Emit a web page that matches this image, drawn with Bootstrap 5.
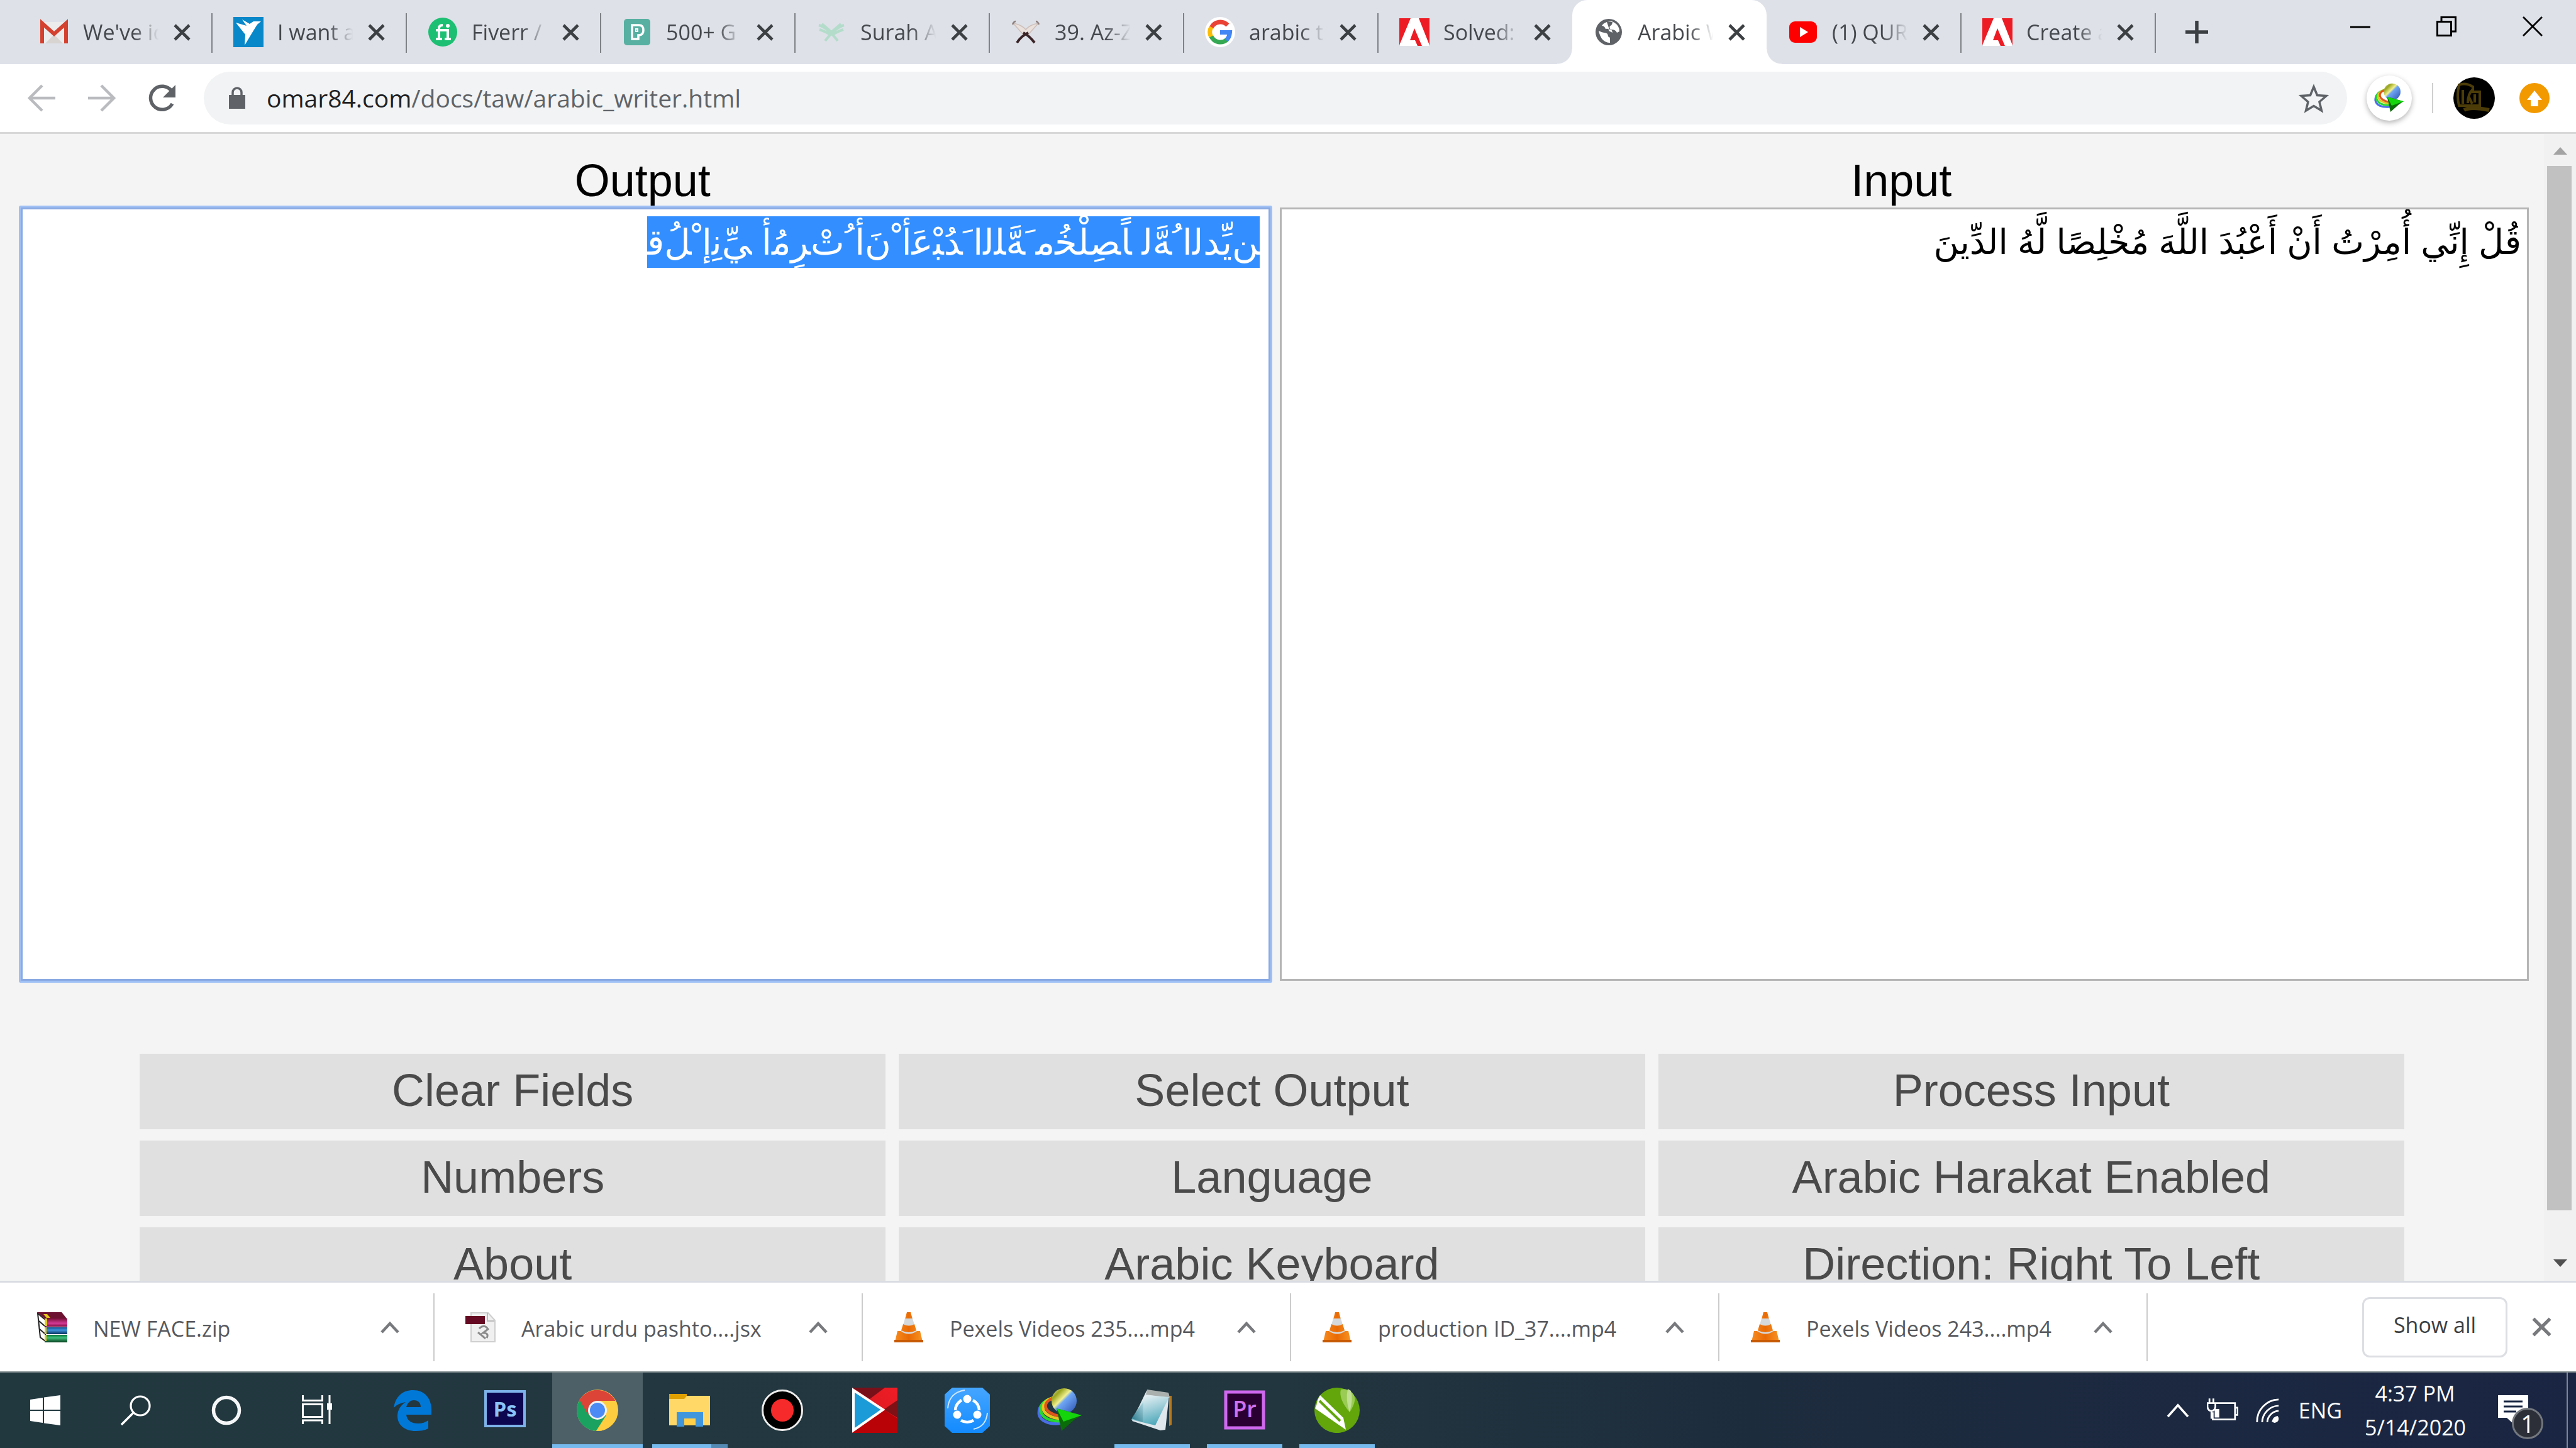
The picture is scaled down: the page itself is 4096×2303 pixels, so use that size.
<!DOCTYPE html>
<html lang="en">
<head>
<meta charset="utf-8">
<meta name="viewport" content="width=device-width, initial-scale=1">
<title>Arabic Writer</title>
<link href="https://cdn.jsdelivr.net/npm/bootstrap@5.3.0/dist/css/bootstrap.min.css" rel="stylesheet">
<style>
html,body{height:100%}
body{font-family:"Open Sans","Noto Sans",sans-serif;color:#3c4043;background:#fff;overflow:hidden}
svg{display:block;flex:none}
button{background:none;border:0;padding:0;color:inherit;font-family:inherit}
.i27{width:27px;height:27px}.i42{width:42px;height:42px}.i48{width:48px;height:48px}.i66{width:66px;height:66px}.i72{width:72px;height:72px}
/* tab strip */
.tabstrip{height:102px;background:#dee1e8;padding-left:28px}
.tab{width:309px;padding-left:34px;position:relative;font-size:34px;line-height:48px}
.tab-title{width:123px;margin:0 21px 0 22px;overflow:hidden;white-space:nowrap;color:#45484d;text-decoration:none;-webkit-mask-image:linear-gradient(90deg,#000 66%,transparent 98%);mask-image:linear-gradient(90deg,#000 66%,transparent 98%)}
.tab::after{content:"";position:absolute;right:-1px;top:21px;height:63px;width:2px;background:#7f8287}
.tab.current{background:#fff;border-radius:24px 24px 0 0}
.tab.current::after,.tab.nosep::after{display:none}
.tab.current::before{content:"";position:absolute;left:-24px;right:-24px;bottom:0;height:24px;background:radial-gradient(circle at 0 0,transparent 23px,#fff 24px) left/24px 24px no-repeat,radial-gradient(circle at 100% 0,transparent 23px,#fff 24px) right/24px 24px no-repeat}
.win-btns{gap:105px;padding:0 53px 18px 0}
/* toolbar */
.toolbar{height:111px;border-bottom:3px solid #d8d8d8;padding:0 42px 0 42px}
.omnibox{height:84px;border-radius:42px;background:#f1f3f4;padding:0 29px 0 38px;margin-left:42px;margin-right:31px}
.url{font-size:39px;line-height:54px;color:#5f6368;background:none;border:0;outline:0}
.url span{color:#202124}
.ext{width:72px;height:72px;border-radius:50%;background:#fff;box-shadow:0 3px 9px rgba(0,0,0,.3)}
.tool-sep{width:2px;height:48px;background:#cfcfcf;margin:0 32px}
.update{margin-left:39px}
/* page */
.page{min-height:0;background:#f4f4f4;font-family:"Liberation Sans",sans-serif}
.page-body{padding:32px 24px 0 33px;overflow:hidden}
.fields{gap:15px}
.fields label{display:block;font-size:72px;line-height:85px;color:#000;text-align:center;padding-right:9px}
.fields textarea{display:block;width:100%;height:1230px;border:3px solid #b5b5b5;border-radius:0;background:#fff;color:#000;padding:11px 9px;resize:none;outline:0;font-family:"Liberation Sans","DejaVu Sans",sans-serif;font-size:55px;line-height:82px;overflow:hidden}
.fields textarea.ringed{border-color:#8aaae3;box-shadow:0 0 0 3px #9fc0f5;border-radius:1px;font-size:57px;padding-right:14px}
.fields textarea::selection{background:#338fff;color:#fff}
.actions{margin:116px 198px 0 189px;display:grid;grid-template-columns:repeat(3,1fr);gap:18px 21px}
.actions button{height:120px;padding-bottom:3px;background:#e0e0e0;color:#4a4a4a;font-size:72px;line-height:117px}
.scrollbar{width:51px;background:#f1f1f1;padding:21px 0 22px}
.scroll-thumb{width:39px;margin:18px 6px 0 5px;height:1661px;background:#c1c1c1}
/* download shelf */
.shelf{height:146px;border-top:3px solid #dadce4;border-bottom:2px solid #8b9697;background:#fff;padding:0 39px 0 10px}
.dl{width:681px;height:108px;border-right:2px solid #ccc;padding:0 54px 0 49px;font-size:34px}
.dl a{color:#57595d;text-decoration:none;margin-left:41px;padding-top:6px}
.dl button,.shelf-x{color:#77797c}
.shelf-x{margin-left:39px}
.showall{height:96px;width:231px;border:3px solid #dcdee3;border-radius:12px;font-size:34px;font-weight:500;color:#3c4043;padding-bottom:6px}
/* taskbar */
.taskbar{height:120px;background:linear-gradient(90deg,#22383f 0,#22363f 50%,#1d2c3d 68%,#1a2543 100%);color:#fff}
.task{width:144px;height:120px;margin-right:3px;display:flex;align-items:center;justify-content:center;position:relative}
.task.sys{margin-right:0}
.task.on{background:#4d6068}
.task.run::after,.task.on::after{content:"";position:absolute;bottom:0;left:12px;right:12px;height:6px;background:#76b9ed}
.task.on::after{left:0;right:0}
.task.multi::after{background:linear-gradient(90deg,#76b9ed 78%,#5489b4 78%)}
.tray{font-size:34px;line-height:54px;padding-right:13px}
.tray-net{margin:0 30px 0 21px}
.clock{width:160px;margin:0 52px 0 36px}
.notes{margin-right:61px}
.note-badge{position:absolute;left:22px;top:20px;width:50px;height:50px;border-radius:50%;background:#2c2f38;border:3px solid #73777e;font-size:38px;line-height:44px;text-align:center}
.desk-edge{width:2px;height:120px;background:#7f8798}
</style>
<script src="https://cdn.jsdelivr.net/npm/bootstrap@5.3.0/dist/js/bootstrap.bundle.min.js"></script>
</head>
<body class="d-flex flex-column">
<svg width="0" height="0" class="position-absolute" aria-hidden="true">
<defs>
<linearGradient id="gGlobe" x1="0" y1="0" x2="1" y2="1"><stop offset="0" stop-color="#dfe3d0"/><stop offset=".22" stop-color="#9aa51c"/><stop offset=".42" stop-color="#f2f090"/><stop offset=".5" stop-color="#6fa6f5"/><stop offset="1" stop-color="#2a4fae"/></linearGradient>
<linearGradient id="gRed" x1="0" y1="1" x2="1" y2="0"><stop offset="0" stop-color="#8f0a0e"/><stop offset=".6" stop-color="#e31b22"/><stop offset="1" stop-color="#f01c26"/></linearGradient>
<linearGradient id="gShare" x1="0" y1="0" x2="0" y2="1"><stop offset="0" stop-color="#46a6ff"/><stop offset="1" stop-color="#128aff"/></linearGradient>
<linearGradient id="gNote" x1=".2" y1="0" x2=".6" y2="1"><stop offset="0" stop-color="#f1f6f8"/><stop offset=".5" stop-color="#9fced9"/><stop offset="1" stop-color="#4aa6b8"/></linearGradient>
<linearGradient id="gDark" x1="1" y1="0" x2="0" y2="1"><stop offset="0" stop-color="#a8d2dc"/><stop offset="1" stop-color="#0c6478"/></linearGradient>
<linearGradient id="gCone" x1="0" y1="0" x2="1" y2="0"><stop offset="0" stop-color="#f68b1f"/><stop offset=".5" stop-color="#e96a05"/><stop offset="1" stop-color="#f79422"/></linearGradient>
<linearGradient id="gPurple" x1="0" y1="0" x2="0" y2="1"><stop offset="0" stop-color="#7c0f3a"/><stop offset=".6" stop-color="#d43a97"/><stop offset="1" stop-color="#7a0a3e"/></linearGradient>
<linearGradient id="gBlueB" x1="0" y1="0" x2="0" y2="1"><stop offset="0" stop-color="#0d4a8a"/><stop offset=".4" stop-color="#3f94dd"/><stop offset="1" stop-color="#0a3260"/></linearGradient>
<linearGradient id="gGreenB" x1="0" y1="0" x2="0" y2="1"><stop offset="0" stop-color="#0a7a3c"/><stop offset=".4" stop-color="#3fbf7c"/><stop offset="1" stop-color="#053d1d"/></linearGradient>
</defs>
<symbol id="x" viewBox="0 0 27 27"><path d="M2 2 25 25M25 2 2 25" stroke="currentColor" stroke-width="4.6" fill="none"/></symbol>
<symbol id="chev" viewBox="0 0 30 20"><path d="M2 18 15 4 28 18" stroke="currentColor" stroke-width="4.5" fill="none"/></symbol>
<symbol id="adobe" viewBox="0 0 48 48"><path fill="#fff" d="M1 2h46v44H1z"/><path fill="#ed1c24" d="M0 2h18L0 45zM31 2h17v43zM24 18l12 28h-7l-4-9h-8z"/></symbol>
<symbol id="idm" viewBox="0 0 72 72"><g fill="none" stroke-width="4.6"><path d="M25 18C10 21 2 30 3 42c2 11 16 17 34 15" stroke="#4a6ee6"/><path d="M25 17C11 20 4 28 6 38c2 9 14 16 30 15" stroke="#27d832"/><path d="M26 16C14 19 8 26 10 35c2 7 12 13 26 14" stroke="#e0c820"/><path d="M26 16C17 20 12 26 14 32c2 6 10 11 20 13" stroke="#e2541c"/></g><circle cx="43" cy="21" r="20" fill="url(#gGlobe)"/><path d="M31 33 70 44 58 52 39 69z" fill="#0a6c08"/><path d="M31 33 71 44 42 54z" fill="#14d40c"/></symbol>
<symbol id="cone" viewBox="0 0 48 48"><path fill="url(#gCone)" d="M21 0h6l3 11H18zM15 22h18l5 14q-14 8-28 0z"/><path fill="#d5d9dc" d="M18 10h12l3 10q-9 5-18 0zM13 28h22l2 5q-13 7-26 0z"/><path fill="url(#gCone)" d="M15 19q9 5 18 0l3 10q-12 6-24 0zM6 30h5q13 9 26 0h5l4 17H2z"/><path fill="#c85a04" d="M1 44h46v4H1z"/></symbol>
</svg>

<nav class="tabstrip d-flex flex-shrink-0" aria-label="Tabs">
<div class="tab d-flex align-items-center"><svg class="i48" viewBox="0 0 48 48"><path fill="#ececec" d="M3 8h42v34H3z"/><path fill="#d8d4d2" d="M10 42 24 28l14 14z"/><path d="M5 42V10l19 17 19-17v32" fill="none" stroke="#d5412f" stroke-width="6"/></svg><a class="tab-title" href="#">We've ic</a><button aria-label="Close"><svg class="i27"><use href="#x"/></svg></button></div>
<div class="tab d-flex align-items-center"><svg class="i48" viewBox="0 0 48 48"><path fill="#0887c9" d="M0 0h48v48H0z"/><path fill="#fff" d="m14 4 12 7 6-4 12 0-6 5-8 13-12 20 1-17L4 9l17 5z"/></svg><a class="tab-title" href="#">I want a</a><button aria-label="Close"><svg class="i27"><use href="#x"/></svg></button></div>
<div class="tab d-flex align-items-center"><svg class="i48" viewBox="0 0 48 48"><circle cx="24" cy="24" r="23" fill="#1dbf73"/><path d="M18 36V18q0-5 6-5M13 21h19v15M13 35h10M27 35h10" fill="none" stroke="#fff" stroke-width="4"/><circle cx="32" cy="14" r="3" fill="#fff"/></svg><a class="tab-title" href="#">Fiverr /</a><button aria-label="Close"><svg class="i27"><use href="#x"/></svg></button></div>
<div class="tab d-flex align-items-center"><svg class="i48" viewBox="0 0 48 48"><rect x="3" y="3" width="42" height="42" rx="5" fill="#57b0a1"/><path d="M16 13h11q7 0 7 8t-8 8v6H16z" fill="none" stroke="#fff" stroke-width="3.5"/><path d="M22 19h3v4h-3z" fill="none" stroke="#fff" stroke-width="2"/></svg><a class="tab-title" href="#">500+ G</a><button aria-label="Close"><svg class="i27"><use href="#x"/></svg></button></div>
<div class="tab d-flex align-items-center"><svg class="i48" viewBox="0 0 48 48"><path d="M4 13q14 4 30 25M44 13Q30 17 14 38M5 20q12 4 18 9M43 20q-12 4-18 9M9 11l15 13 15-13" fill="none" stroke="#b4dccb" stroke-width="4"/></svg><a class="tab-title" href="#">Surah A</a><button aria-label="Close"><svg class="i27"><use href="#x"/></svg></button></div>
<div class="tab d-flex align-items-center"><svg class="i48" viewBox="0 0 48 48"><path fill="#eae0dc" stroke="#cdbfba" stroke-width="1.5" d="M4 10q13 2 20 10Q31 12 44 10L28 28h-8z"/><path d="M3 12q2-5 5-5M45 12q-2-5-5-5" fill="none" stroke="#8d7f7d" stroke-width="2.5"/><path d="M20 25q10 5 18 16M28 25Q17 30 10 41" fill="none" stroke="#3a2427" stroke-width="4"/></svg><a class="tab-title" href="#">39. Az-Z</a><button aria-label="Close"><svg class="i27"><use href="#x"/></svg></button></div>
<div class="tab d-flex align-items-center"><svg class="i48" viewBox="0 0 48 48"><circle cx="24" cy="24" r="24" fill="#fff"/><g fill="none" stroke-width="7"><path d="M36 13A16 16 0 0 0 10 17" stroke="#ea4335"/><path d="M10 16a16 16 0 0 0 0 16" stroke="#fbbc05"/><path d="M10 31a16 16 0 0 0 25 5" stroke="#34a853"/><path d="M24 24.500H39.500Q39 32 34 37" stroke="#4285f4"/></g></svg><a class="tab-title" href="#">arabic t</a><button aria-label="Close"><svg class="i27"><use href="#x"/></svg></button></div>
<div class="tab nosep d-flex align-items-center"><svg class="i48"><use href="#adobe"/></svg><a class="tab-title" href="#">Solved:</a><button aria-label="Close"><svg class="i27"><use href="#x"/></svg></button></div>
<div class="tab current d-flex align-items-center"><svg class="i48" viewBox="0 0 48 48"><circle cx="24" cy="24" r="21" fill="#5f6368"/><path fill="#fff" d="M8 22q6 3 9 3 6 0 6 6l3 2v8q-14 0-18-19zM22 8l8 0q-1 6-4 6-2 4 2 6 7 0 9 5l4-2q0-9-8-14l-4-2zM21 8q-6 2-8 6 4 0 6 5 6-1 5 3l6 3q-1-6-5-5-2-6-4-12z"/></svg><a class="tab-title" href="#">Arabic W</a><button aria-label="Close"><svg class="i27"><use href="#x"/></svg></button></div>
<div class="tab d-flex align-items-center"><svg class="i48" viewBox="0 0 48 48"><rect x="2" y="7" width="44" height="34" rx="9" fill="#f00"/><path d="m19 16 13 8-13 8z" fill="#fff"/></svg><a class="tab-title" href="#">(1) QUR</a><button aria-label="Close"><svg class="i27"><use href="#x"/></svg></button></div>
<div class="tab d-flex align-items-center"><svg class="i48"><use href="#adobe"/></svg><a class="tab-title" href="#">Create a</a><button aria-label="Close"><svg class="i27"><use href="#x"/></svg></button></div>
<button class="ms-5" aria-label="New tab"><svg width="36" height="36" viewBox="0 0 36 36"><path d="M18 0v36M0 18h36" stroke="#3c4043" stroke-width="5.500"/></svg></button>
<div class="win-btns d-flex align-items-center ms-auto text-black">
<button aria-label="Minimize"><svg width="32" height="32" viewBox="0 0 32 32"><path d="M0 17h32" stroke="#000" stroke-width="3"/></svg></button>
<button aria-label="Restore"><svg width="32" height="32" viewBox="0 0 32 32"><path d="M1.500 8.500h22v22h-22zM8 8V1.500h22.500V24H24" fill="none" stroke="#000" stroke-width="3"/></svg></button>
<button aria-label="Close window"><svg width="32" height="32" viewBox="0 0 32 32"><path d="m1 1 30 30M31 1 1 31" stroke="#000" stroke-width="2.800"/></svg></button>
</div>
</nav>

<div class="toolbar d-flex align-items-center flex-shrink-0">
<button aria-label="Back"><svg class="i48" viewBox="0 0 48 48"><path d="M46 24H6M25 4 5 24l20 20" fill="none" stroke="#b9bbbe" stroke-width="4.500"/></svg></button>
<button class="ms-5" aria-label="Forward"><svg class="i48" viewBox="0 0 48 48"><path d="M2 24h40M23 4l20 20-20 20" fill="none" stroke="#b9bbbe" stroke-width="4.500"/></svg></button>
<button class="ms-5" aria-label="Reload"><svg class="i48" viewBox="0 0 48 48"><path d="M40 33A18.500 18.500 0 1 1 39 13" fill="none" stroke="#5f6368" stroke-width="5.500"/><path d="M45 3v20H25z" fill="#5f6368"/></svg></button>
<div class="omnibox d-flex align-items-center flex-grow-1">
<svg width="30" height="36" viewBox="0 0 30 36"><path d="M2 13h26v22H2z" fill="#5f6368"/><path d="M8 14V9a7 7 0 0 1 14 0v5" fill="none" stroke="#5f6368" stroke-width="3.500"/></svg>
<div class="url ms-4 ps-2" role="textbox" aria-label="Address"><span>omar84.com</span>/docs/taw/arabic_writer.html</div>
<button class="ms-auto" aria-label="Bookmark"><svg class="i48" viewBox="0 0 48 48"><path d="m24 6 5.500 13.500L44 20.500 33 30l3.500 14L24 36.500 11.500 44 15 30 4 20.500l14.500-1z" fill="none" stroke="#5f6368" stroke-width="3.500"/></svg></button>
</div>
<button class="ext d-flex align-items-center justify-content-center" aria-label="Download manager"><svg class="i48"><use href="#idm"/></svg></button>
<div class="tool-sep"></div>
<svg class="i66" viewBox="0 0 66 66"><circle cx="33" cy="33" r="33" fill="#000"/><path d="M9 12q11-4 22 3v8h11v22H9q-4-16 0-33zm22 7q-8 7-8 22M15 20v22M34 27v13M24 30l6 12" fill="none" stroke="#4c3c08" stroke-width="4"/><path d="M17 52q10-6 40 0" fill="none" stroke="#4c3c08" stroke-width="6"/></svg>
<svg class="i48 update" viewBox="0 0 48 48"><circle cx="24" cy="24" r="24" fill="#f29900"/><path d="M24 12 36 27h-6v10H18V27h-6z" fill="#fff"/></svg>
</div>

<main class="page d-flex flex-grow-1">
<div class="page-body flex-grow-1">
<div class="fields d-flex">
<div class="flex-fill w-50"><label for="output">Output</label><textarea id="output" class="ringed" dir="rtl">َﻦﻳِّﺪﻟﺍ ُﻪَّﻟ ﺎًﺼِﻠْﺨُﻣ َﻪَّﻠﻟﺍ َﺪُﺒْﻋَﺃ ْﻥَﺃ ُﺕْﺮِﻣُﺃ ﻲِّﻧِﺇ ْﻞُﻗ</textarea></div>
<div class="flex-fill w-50"><label for="input">Input</label><textarea id="input" dir="rtl">قُلْ إِنِّي أُمِرْتُ أَنْ أَعْبُدَ اللَّهَ مُخْلِصًا لَّهُ الدِّينَ</textarea></div>
</div>
<div class="actions">
<button>Clear Fields</button><button>Select Output</button><button>Process Input</button>
<button>Numbers</button><button>Language</button><button>Arabic Harakat Enabled</button>
<button>About</button><button>Arabic Keyboard</button><button>Direction: Right To Left</button>
</div>
</div>
<div class="scrollbar d-flex flex-column flex-shrink-0">
<svg class="mx-auto" width="22" height="12" viewBox="0 0 22 12"><path d="m11 0 11 12H0z" fill="#a3a3a3"/></svg>
<div class="scroll-thumb"></div>
<svg class="mx-auto mt-auto" width="22" height="12" viewBox="0 0 22 12"><path d="M0 0h22L11 12z" fill="#505050"/></svg>
</div>
</main>

<footer class="shelf d-flex align-items-center flex-shrink-0">
<div class="dl d-flex align-items-center"><svg class="i48" viewBox="0 0 48 48"><path fill="#fff" stroke="#222" stroke-width="2" d="m1 2 12 10v34L5 40zM3 14l9 8M3 26l9 8"/><path fill="#6d1230" d="M0 0h39l8 10H12z"/><path fill="url(#gPurple)" d="M12 10h36v13H12z"/><path fill="url(#gBlueB)" d="M12 24h36v11H12z"/><path fill="url(#gGreenB)" d="M12 36h36v12H12z"/><path fill="#e4c81c" d="M12 10h4v12h-4zM12 24h3v11h-3zM12 36h3v10h-3zM10 3h6l5 6h-6z"/></svg><a href="#">NEW FACE.zip</a><button class="ms-auto" aria-label="Options"><svg width="30" height="20"><use href="#chev"/></svg></button></div>
<div class="dl d-flex align-items-center"><svg class="i48" viewBox="0 0 48 48"><path fill="#f0f0f0" stroke="#cfcfcf" stroke-width="2" d="M9 1h27l11 12v34H9z"/><path fill="none" stroke="#bcbcbc" stroke-width="2" d="M35 1v13h11"/><path d="M22 26q8-8 14 1l-8 6q10 0 6 8M20 32l12 10" fill="none" stroke="#8b8b8b" stroke-width="3"/><path fill="#650a22" d="M0 6h31v13H0z"/></svg><a href="#">Arabic urdu pashto....jsx</a><button class="ms-auto" aria-label="Options"><svg width="30" height="20"><use href="#chev"/></svg></button></div>
<div class="dl d-flex align-items-center"><svg class="i48"><use href="#cone"/></svg><a href="#">Pexels Videos 235....mp4</a><button class="ms-auto" aria-label="Options"><svg width="30" height="20"><use href="#chev"/></svg></button></div>
<div class="dl d-flex align-items-center"><svg class="i48"><use href="#cone"/></svg><a href="#">production ID_37....mp4</a><button class="ms-auto" aria-label="Options"><svg width="30" height="20"><use href="#chev"/></svg></button></div>
<div class="dl d-flex align-items-center"><svg class="i48"><use href="#cone"/></svg><a href="#">Pexels Videos 243....mp4</a><button class="ms-auto" aria-label="Options"><svg width="30" height="20"><use href="#chev"/></svg></button></div>
<button class="showall ms-auto">Show all</button>
<button class="shelf-x" aria-label="Close downloads"><svg width="31" height="31"><use href="#x"/></svg></button>
</footer>

<div class="taskbar d-flex flex-shrink-0">
<button class="task sys" aria-label="Start"><svg class="i48" viewBox="0 0 48 48"><path fill="#fff" d="M0 7 20 4v19H0zM22 3.500 48 0v23H22zM0 25h20v19L0 41zM22 25h26v23l-26-3.500z"/></svg></button>
<button class="task sys" aria-label="Search"><svg class="i48" viewBox="0 0 48 48"><circle cx="31" cy="17" r="15" fill="none" stroke="#fff" stroke-width="3.200"/><path d="M20 28 1 47" stroke="#fff" stroke-width="3.500"/></svg></button>
<button class="task sys" aria-label="Cortana"><svg class="i48" viewBox="0 0 48 48"><circle cx="24" cy="24" r="20.500" fill="none" stroke="#f4f6f7" stroke-width="5.500"/></svg></button>
<button class="task sys me-2" aria-label="Task view"><svg class="i48" viewBox="0 0 48 48"><path d="M1.500 0v8.500h31V0M1.500 14.500h31v20h-31zM1.500 46v-6h31v6M44 0v46" fill="none" stroke="#fff" stroke-width="3"/><path d="M40 13h8v10h-8z" fill="#fff"/></svg></button>
<button class="task" aria-label="Edge"><svg class="i66" viewBox="0 0 66 66"><path fill="#0078d7" d="M3 29C6 11 17 1 34 1c18 0 29 13 29 31v8H23c1 10 9 14 19 14 6 0 12-2 16-5v13c-6 3-13 4-20 4C20 66 9 56 9 42c0-9 5-17 13-22C16 21 9 23 3 29zM23 28h23c0-7-4-11-11-11-6 0-10 4-12 11z"/></svg></button>
<button class="task" aria-label="Photoshop"><svg width="66" height="66" viewBox="0 0 66 66"><rect x="2" y="3" width="62" height="55" fill="#0c0650" stroke="#7db3ea" stroke-width="4"/><text x="33" y="43" font-family="Open Sans" font-weight="700" font-size="33" fill="#8ac3f7" text-anchor="middle">Ps</text></svg></button>
<button class="task on" aria-label="Chrome"><svg class="i66" viewBox="0 0 66 66"><circle cx="33" cy="33" r="33" fill="#ffcd40"/><path d="M33 33 4.400 16.500A33 33 0 0 0 31 66L47 41z" fill="#1aa260"/><path d="M4.400 16.500A33 33 0 0 1 61.600 18H33L18 40z" fill="#db4437"/><path d="M33 18h28.600A33 33 0 0 1 31 66l16-25z" fill="#ffcd40"/><circle cx="33" cy="33" r="15" fill="#f1f1f1"/><circle cx="33" cy="33" r="12" fill="#4c8bf5"/></svg></button>
<button class="task run multi" aria-label="File Explorer"><svg class="i66" viewBox="0 0 66 66"><path fill="#e0a000" d="M0 7h28v12H0z"/><path fill="#ffd867" d="M0 15h24l4-5h37v47H0z"/><path fill="#3f96dd" d="M12 59V36h42v23H42V46H24v13z"/><path fill="#ffcf48" d="M24 46h18v11H24z"/></svg></button>
<button class="task" aria-label="Recorder"><svg class="i66" viewBox="0 0 66 66"><circle cx="33" cy="33" r="31.500" fill="#000" stroke="#eee" stroke-width="3"/><circle cx="33" cy="33" r="18" fill="#f62a2a"/></svg></button>
<button class="task" aria-label="Media player"><svg class="i72" viewBox="0 0 72 72"><path fill="url(#gRed)" d="M0 0h72v72H0z"/><path fill="#78101a" d="M0 0h52L28 18z"/><path fill="#7d1116" d="M72 20v28L50 35z"/><path fill="#b90207" d="M0 72 50 35l22 14v23z"/><path d="M2 4v64l47-33z" fill="#1b9bd7" stroke="#fff" stroke-width="4"/></svg></button>
<button class="task" aria-label="Share"><svg class="i72" viewBox="0 0 72 72"><path fill="url(#gShare)" d="M12 0h48l12 11v50L60 72H12L0 61V11z"/><path d="M27 20A19 19 0 0 0 17 36M45 20A19 19 0 0 1 55 36M26 52a19 19 0 0 0 20 0" fill="none" stroke="#fff" stroke-width="4.500"/><circle cx="36" cy="18" r="6.500" fill="#fff"/><circle cx="20" cy="43" r="6.500" fill="#fff"/><circle cx="52" cy="43" r="6.500" fill="#fff"/><path d="M5 33Q7 8 32 4M68 40Q66 62 46 66" fill="none" stroke="#cfe6ff" stroke-width="2"/></svg></button>
<button class="task" aria-label="Internet Download Manager"><svg class="i72"><use href="#idm"/></svg></button>
<button class="task run" aria-label="Notepad"><svg class="i66" viewBox="0 0 66 66"><path fill="#b8791c" d="M60 10h4v46l-4 2z"/><path fill="#dfe7ec" d="m24 2 36 6-6 56-8 1L1 50z"/><path fill="#aab0ae" d="m25 0 34 5 2 8-38-5z"/><path fill="url(#gNote)" d="m23 9 37 3-22 45L0 48z"/><path fill="url(#gDark)" opacity=".8" d="m19 20-1 32-18-6z"/></svg></button>
<button class="task run" aria-label="Premiere Pro"><svg class="i66" viewBox="0 0 66 66"><rect x="3" y="4" width="60" height="57" fill="#2a0033" stroke="#cf68ee" stroke-width="5"/><text x="33" y="44" font-family="Open Sans" font-weight="600" font-size="36" fill="#d070ee" text-anchor="middle">Pr</text></svg></button>
<button class="task run" aria-label="CorelDRAW"><svg class="i72" viewBox="0 0 72 72"><circle cx="36" cy="36" r="36" fill="#62a60c"/><path d="M9 12 46 48l4 19L3 30Q4 20 9 12z" fill="#fff"/><path d="M1 29 37 62l13 5-3 3Q34 75 20 68 0 57 1 29z" fill="#62a60c"/><path d="M1 33 3 28 50 67z" fill="#fff"/><path d="M8 21 41 53" stroke="#62a60c" stroke-width="4"/><path d="M42 3Q38 18 56 39 70 18 60 8 52 1 42 3z" fill="#9acb54"/><path d="M53 2q-4 18 3 37Q62 18 58 5" fill="#c0df92"/></svg></button>

<div class="tray d-flex align-items-center ms-auto">
<button aria-label="Hidden icons"><svg width="36" height="24" viewBox="0 0 36 24"><path d="m2 22 16-18 16 18" fill="none" stroke="#fff" stroke-width="3.500"/></svg></button>
<svg class="ms-4 ps-1" width="54" height="42" viewBox="0 0 48 38"><path d="M14 8h29v25H9V22M43 15h4v11h-4M4 1v7M10 1v7M1 8h12v6q-1 6-6 6t-6-6zM7 20v12" fill="none" stroke="#fff" stroke-width="2.600"/><path d="M12 17h7v13h-7z" fill="#fff"/></svg>
<svg class="tray-net ms-4 ps-1" width="42" height="42" viewBox="0 0 42 42"><g fill="none" stroke="#fff" stroke-width="3"><path d="M2 42A39 39 0 0 1 40 2"/><path d="M11 42A30 30 0 0 1 40 13"/><path d="M20 42A21 21 0 0 1 40 22"/></g><path d="M38 31a7 7 0 0 1 0 10 8 8 0 0 1-10 0q2-9 10-10z" fill="#fff"/></svg>
<span>ENG</span>
<div class="clock text-center"><div>4:37 PM</div><div>5/14/2020</div></div>
<button class="notes position-relative i48" aria-label="Notifications"><svg class="i48" viewBox="0 0 48 48"><path fill="#fff" d="M0 0h48v36H26v11L14 36H0z"/><path d="M9 10h30M9 18h30M9 26h20" stroke="#1b2744" stroke-width="3"/></svg><span class="note-badge">1</span></button>
<div class="desk-edge"></div>
</div>
</div>
<script>
const out=document.getElementById('output');
out.focus({preventScroll:true});
out.select();
document.querySelector('.page-body').scrollTop=0;
</script>
</body>
</html>
